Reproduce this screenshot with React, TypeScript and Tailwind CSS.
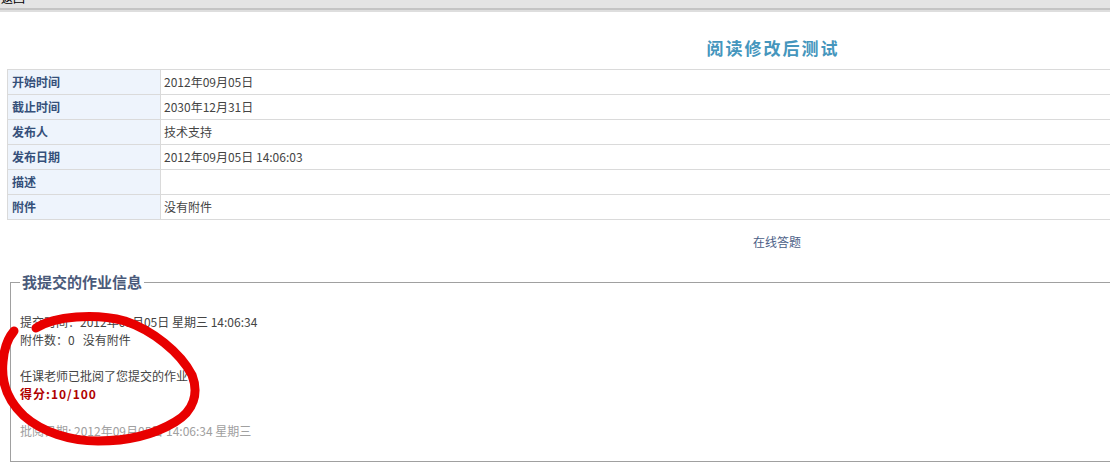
import { clsx } from "clsx";

const rows = [
  { label: "开始时间", value: "2012年09月05日" },
  { label: "截止时间", value: "2030年12月31日" },
  { label: "发布人", value: "技术支持" },
  { label: "发布日期", value: "2012年09月05日 14:06:03" },
  { label: "描述", value: "" },
  { label: "附件", value: "没有附件" },
];

const font = "font-['SimSun','Noto_Sans_CJK_SC',sans-serif]";

function RedCircle() {
  // hand drawn marker ring over the submission info
  return (
    <svg
      className="pointer-events-none absolute left-0 top-0"
      width="220"
      height="466"
      viewBox="0 0 220 466"
    >
      <path
        d="M36 328 C 55 316, 95 313, 125 321 C 152 330, 180 352, 192 375 C 199 393, 194 411, 175 422 C 155 434, 128 441, 98 441 C 70 441, 42 432, 24 416 C 8 401, 1 382, 3 362 C 4 348, 8 338, 14 331"
        fill="none"
        stroke="#e80000"
        strokeWidth="9"
        strokeLinecap="round"
      />
    </svg>
  );
}

export default function App() {
  return (
    <div
      className={clsx(
        "relative h-[466px] w-[1110px] overflow-hidden bg-white text-[12px] text-[#333]",
        font,
      )}
    >
      {/* top strip */}
      <div className="h-[8px] overflow-hidden bg-[#e4e4e4]">
        <span className="-mt-[9px] block pl-[1px] text-[12px] leading-[14px] text-black">
          返回
        </span>
      </div>
      <div className="h-[2px] bg-[#c4c4c4]" />
      <div className="h-[2px] bg-[#dedede]" />

      <div className="w-[1544px]">
        <div className="flex h-[57px] items-center justify-center pt-[14px]">
          <h1 className="pl-[2px] text-[17px] font-bold tracking-[2px] text-[#4596bd]">
            阅读修改后测试
          </h1>
        </div>

        <table className="ml-[7px] w-[1523px] border-collapse">
          <tbody>
            {rows.map((r) => (
              <tr key={r.label} className="h-[25px]">
                <td className="w-[153px] border border-[#dadada] bg-[#eef4fc] pl-[4px] font-bold text-[#35507a]">
                  {r.label}
                </td>
                <td className="border border-[#dadada] pl-[3px] text-[#444]">
                  {r.value}
                </td>
              </tr>
            ))}
          </tbody>
        </table>

        <div className="flex h-[44px] items-center pl-[753px]">
          <a className="cursor-pointer text-[#4b5e86]">在线答题</a>
        </div>

        <fieldset className="ml-[10px] mt-[9px] h-[189px] w-[1510px] border border-[#a0a0a0] pl-[9px]">
          <legend className="px-[2px] text-[15px] font-bold leading-[18px] text-[#4a5a7a]">
            我提交的作业信息
          </legend>
          <div className="pt-[22px] leading-[18px] text-[#444]">
            <p>提交时间：2012年09月05日 星期三 14:06:34</p>
            <p>附件数：0&nbsp;&nbsp; 没有附件</p>
            <p>&nbsp;</p>
            <p>任课老师已批阅了您提交的作业</p>
            <p className="font-bold tracking-[1px] text-[#b00000]">得分:10/100</p>
            <p className="h-[19px]">&nbsp;</p>
            <p className="text-[#a0a0a0]">批阅日期: 2012年09月05日 14:06:34 星期三</p>
          </div>
        </fieldset>
      </div>

      <RedCircle />
    </div>
  );
}
